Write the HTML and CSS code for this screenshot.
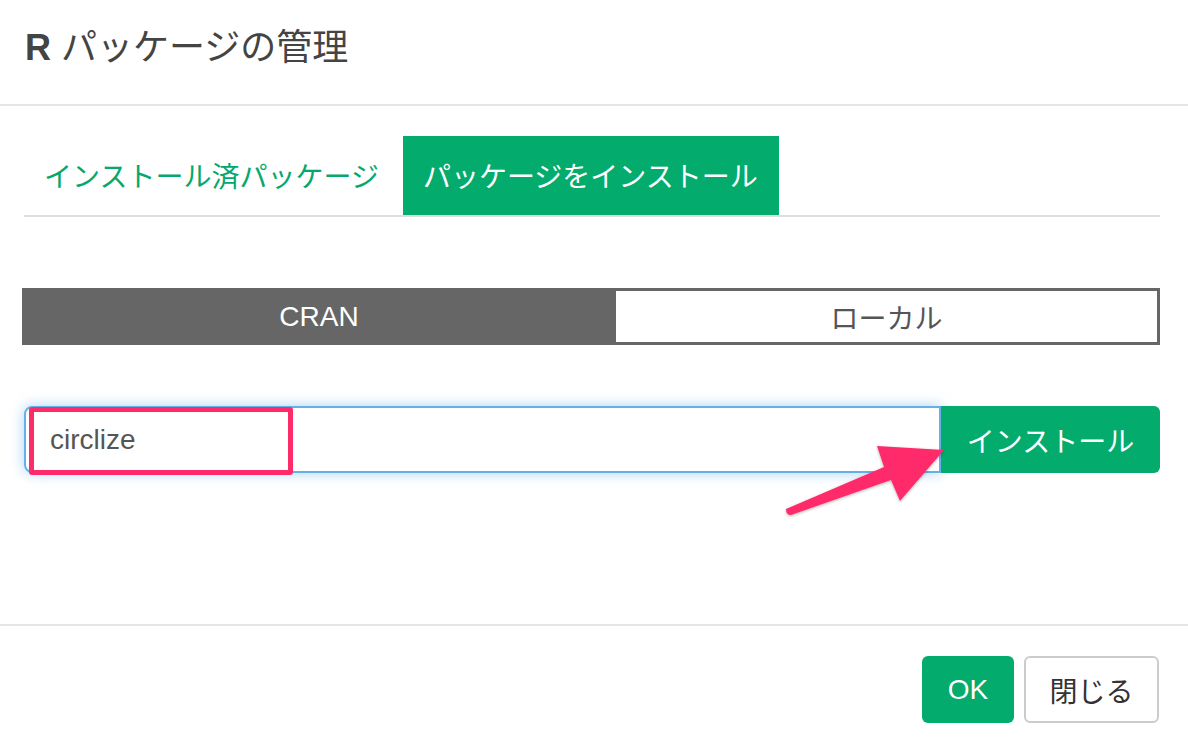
FILE: index.html
```html
<!DOCTYPE html>
<html lang="ja">
<head>
<meta charset="utf-8">
<link rel="stylesheet" href="styles.css">
</head>
<body>
<div class="modal">
  <div class="modal-header">
    <h4 class="modal-title"><span class="r">R</span> パッケージの管理</h4>
  </div>
  <div class="modal-body">
    <ul class="tabs">
      <li class="tab">インストール済パッケージ</li>
      <li class="tab active">パッケージをインストール</li>
    </ul>
    <div class="segment">
      <div class="seg seg-on">CRAN</div>
      <div class="seg seg-off">ローカル</div>
    </div>
    <div class="input-group">
      <div class="input">circlize</div>
      <div class="install-btn">インストール</div>
      <div class="highlight"></div>
      <svg class="arrow" width="200" height="110" viewBox="760 420 200 110">
        <defs>
          <filter id="sh" x="-20%" y="-20%" width="140%" height="140%">
            <feDropShadow dx="0" dy="1" stdDeviation="1.5" flood-color="#000" flood-opacity="0.3"/>
          </filter>
        </defs>
        <path filter="url(#sh)" fill="#fe2b6b" d="M786 509 L884 467 L877 446 L944 450 L900 501 L891 480 L791 515 Q786 515 786 509 Z"/>
      </svg>
    </div>
  </div>
  <div class="modal-footer">
    <div class="btn btn-ok">OK</div>
    <div class="btn btn-close">閉じる</div>
  </div>
</div>
</body>
</html>
```

FILE: styles.css
```css
html, body {
  margin: 0;
  padding: 0;
  background: #fff;
}
body {
  font-family: "Liberation Sans", "Noto Sans CJK JP", sans-serif;
  width: 1188px;
  height: 750px;
  overflow: hidden;
}
.modal {
  width: 1188px;
  height: 750px;
  display: flex;
  flex-direction: column;
}
.modal-header {
  height: 104px;
  border-bottom: 2px solid #e5e5e5;
  display: flex;
  align-items: center;
  padding: 0 25px;
  box-sizing: content-box;
  flex: none;
}
.modal-title {
  margin: 0;
  margin-top: -8px;
  font-size: 36px;
  font-weight: normal;
  color: #444;
  line-height: 50px;
}
.modal-title .r {
  font-weight: bold;
}
.modal-body {
  height: 520px;
  box-sizing: border-box;
  padding: 30px 28px 0 24px;
  border-bottom: 2px solid #e5e5e5;
  flex: none;
}
.tabs {
  list-style: none;
  margin: 0;
  padding: 0;
  display: flex;
  border-bottom: 2px solid #ddd;
}
.tab {
  height: 79px;
  line-height: 79px;
  padding: 0 20px;
  margin-right: 4px;
  font-size: 28px;
  color: #05a86c;
  font-family: "Noto Sans CJK JP", sans-serif;
}
.tab.active {
  background: #03ab6d;
  color: #fff;
  padding: 0 21px 0 20px;
}
.segment {
  margin: 71px 0 0 -2px;
  height: 57px;
  width: 1138px;
  display: flex;
  border: 3px solid #666;
  box-sizing: border-box;
}
.seg {
  display: flex;
  align-items: center;
  justify-content: center;
  font-size: 28px;
}
.seg-on {
  width: 594px;
  flex: none;
  background: #666;
  color: #fff;
  margin: -3px 0 -3px -3px;
}
.seg-off {
  flex: 1;
  color: #555;
  font-family: "Noto Sans CJK JP", sans-serif;
}
.input-group {
  position: relative;
  margin-top: 61px;
  display: flex;
  height: 67px;
  width: 1136px;
}
.input {
  flex: 1;
  border: 2px solid #66afe9;
  border-radius: 8px 0 0 8px;
  box-shadow: 0 0 14px rgba(102, 175, 233, 0.55);
  padding: 0 24px;
  display: flex;
  align-items: center;
  font-size: 28px;
  color: #555;
}
.install-btn {
  width: 219px;
  background: #03ab6d;
  color: #fff;
  border-radius: 0 6px 6px 0;
  display: flex;
  align-items: center;
  justify-content: center;
  font-size: 28px;
  font-family: "Noto Sans CJK JP", sans-serif;
}
.highlight {
  position: absolute;
  left: 5px;
  top: 1px;
  width: 264px;
  height: 68px;
  border: 5px solid #fe2b6b;
  border-radius: 3px;
  box-sizing: border-box;
}
.arrow {
  position: absolute;
  left: 736px;
  top: 14px;
  overflow: visible;
}
.modal-footer {
  display: flex;
  justify-content: flex-end;
  gap: 10px;
  padding: 30px 29px 0 0;
}
.btn {
  height: 67px;
  box-sizing: border-box;
  border-radius: 6px;
  display: flex;
  align-items: center;
  justify-content: center;
  font-size: 28px;
}
.btn-ok {
  width: 92px;
  background: #03ab6d;
  color: #fff;
}
.btn-close {
  width: 135px;
  border: 2px solid #ccc;
  color: #333;
  font-family: "Noto Sans CJK JP", sans-serif;
}
```
